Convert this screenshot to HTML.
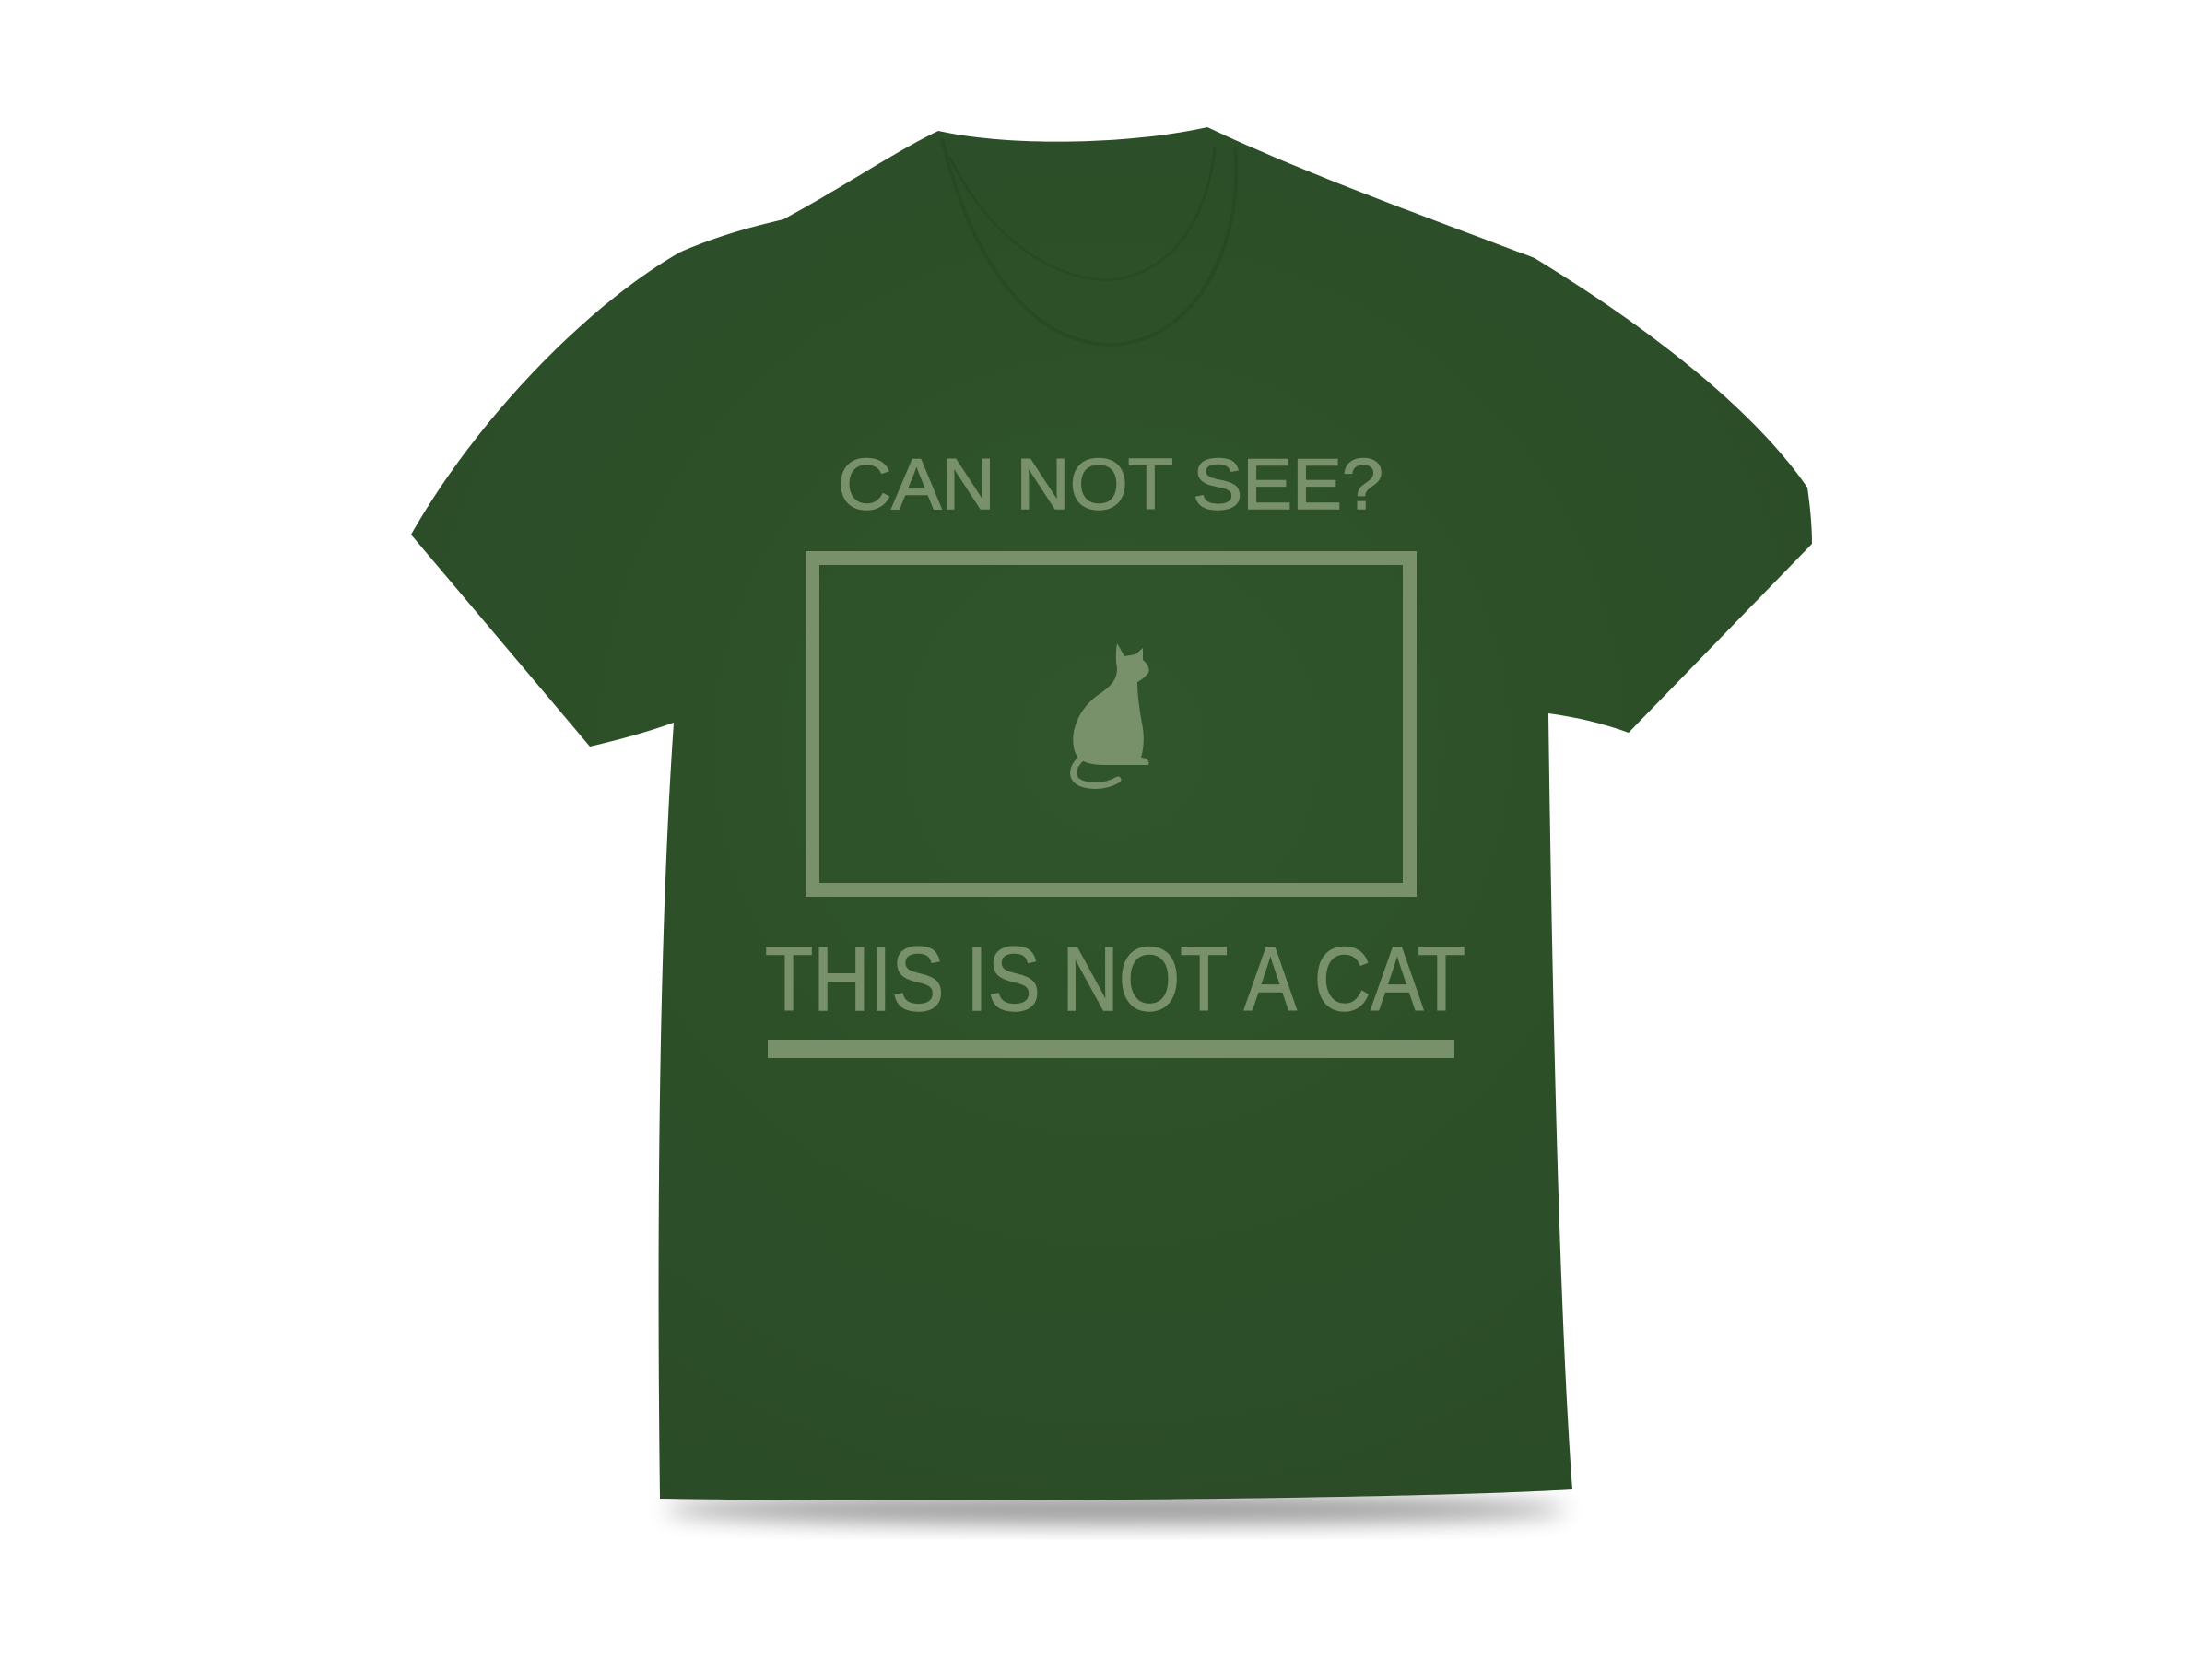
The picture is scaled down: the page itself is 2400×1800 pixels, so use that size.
<!DOCTYPE html>
<html><head><meta charset="utf-8"><style>
html,body{margin:0;padding:0;background:#fff;width:2400px;height:1800px;overflow:hidden}
svg{display:block}
</style></head><body>
<svg width="2400" height="1800" viewBox="0 0 2400 1800" xmlns="http://www.w3.org/2000/svg">
<defs>
<filter id="sh" x="-20%" y="-50%" width="140%" height="200%"><feGaussianBlur stdDeviation="12"/></filter>
<radialGradient id="g" cx="50%" cy="45%" r="65%"><stop offset="0" stop-color="#30552c"/><stop offset="1" stop-color="#2a4b26"/></radialGradient>
</defs>
<ellipse cx="1210" cy="1638" rx="490" ry="16" fill="#000" opacity="0.4" filter="url(#sh)"/>
<path d="M1018,142 C1100,160 1230,156 1310,138 C1420,190 1560,240 1665,280 C1780,350 1900,440 1961,529 C1964,550 1966,570 1966,590 L1767,795 C1740,785 1710,778 1680,774 C1683,1000 1690,1400 1706,1616 C1500,1628 950,1630 716,1626 C712,1300 716,1000 731,784 C700,795 670,803 640,810 L446,580 C520,450 640,330 737,274 C780,255 820,245 850,238 C920,200 970,165 1018,142 Z" fill="url(#g)"/>
<path d="M1022,150 C1050,270 1110,372 1205,374 C1300,372 1350,260 1340,160" fill="none" stroke="#25441f" stroke-width="4" opacity="0.5"/>
<path d="M1030,170 C1070,250 1130,300 1200,304 C1270,300 1310,240 1318,160" fill="none" stroke="#23401f" stroke-width="3" opacity="0.4"/>
<g fill="#78916a" stroke="#78916a" stroke-width="1.5">
<text x="1205" y="552" text-anchor="middle" font-family="Liberation Sans, sans-serif" font-size="78" textLength="592" lengthAdjust="spacingAndGlyphs">CAN NOT SEE?</text>
<text x="1210" y="1096" text-anchor="middle" font-family="Liberation Sans, sans-serif" font-size="98" textLength="760" lengthAdjust="spacingAndGlyphs">THIS IS NOT A CAT</text>
</g>
<g fill="#78916a">
<rect x="833" y="1128" width="745" height="20"/>
<path d="M1212,698 L1220,712 L1232,710 L1240,703 L1240,716 C1245,720 1248,726 1246,730 C1242,735 1238,738 1234,740 C1234,752 1236,770 1240,790 C1242,805 1240,815 1238,822 C1244,822 1248,826 1246,830 L1200,830 C1185,830 1170,828 1166,815 C1160,795 1170,770 1190,755 C1205,745 1212,738 1212,725 C1210,715 1211,705 1212,698 Z"/>
</g>
<path d="M1172,824 C1160,836 1162,850 1182,852 C1196,854 1206,850 1213,846" fill="none" stroke="#78916a" stroke-width="7" stroke-linecap="round"/>
<rect x="881.5" y="605.5" width="648" height="360" fill="none" stroke="#78916a" stroke-width="15"/>
</svg>
</body></html>
